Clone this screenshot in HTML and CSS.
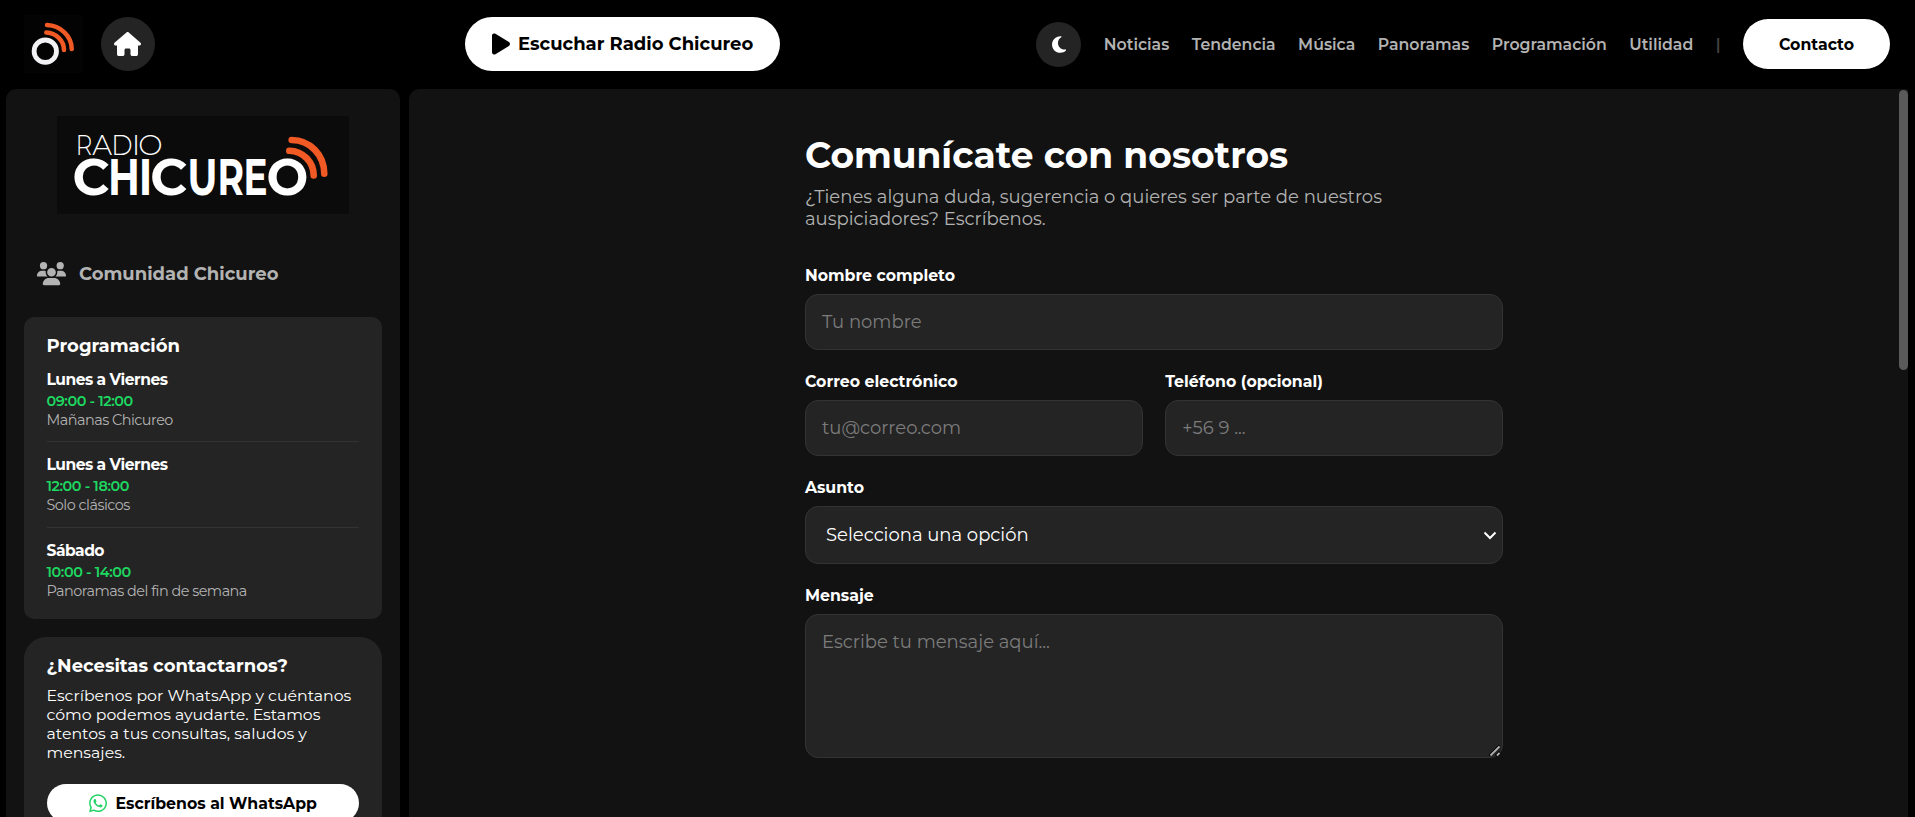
FILE: index.html
```html
<!DOCTYPE html>
<html lang="es">
<head>
  <meta charset="UTF-8">
  <title>Contacto - Radio Chicureo</title>
  <link rel="stylesheet" href="styles.css">
</head>
<body>

<header class="topbar">
  <div class="topbar-left">
    <a href="#" class="logo-mini">
      <svg width="59" height="58" viewBox="24 15 59 58">
        <circle cx="45.3" cy="51.2" r="11.2" fill="none" stroke="#f2f2f5" stroke-width="4.8"/>
        <path d="M47 25C60.5 25.5 71.7 36 71.7 49M46.3 32.5C56 33 64 40.5 64 50" fill="none" stroke="#f15a24" stroke-width="4.5" stroke-linecap="round"/>
      </svg>
    </a>
    <a href="#" class="btn-home">
      <svg width="27" height="24" viewBox="0 0 576 512" fill="#fff"><path d="M575.8 255.5c0 18-15 32.1-32 32.1h-32l.7 160.2c0 2.7-.2 5.4-.5 8.1V472c0 22.1-17.9 40-40 40H456c-1.1 0-2.2 0-3.3-.1c-1.4 .1-2.8 .1-4.2 .1H416 392c-22.1 0-40-17.9-40-40V448 384c0-17.7-14.3-32-32-32H256c-17.7 0-32 14.3-32 32v64 24c0 22.1-17.9 40-40 40H160 128.1c-1.5 0-3-.1-4.5-.2c-1.2 .1-2.4 .2-3.6 .2H104c-22.1 0-40-17.9-40-40V360c0-.9 0-1.9 .1-2.8V287.6H32c-18 0-32-14-32-32.1c0-9 3-17 10-24L266.4 8c7-7 15-8 22-8s15 2 21 7L564.8 231.5c8 7 12 15 11 24z"/></svg>
    </a>
  </div>

  <button class="btn-play">
    <svg width="18" height="24" viewBox="0 0 384 512"><path d="M73 39c-14.8-9.1-33.4-9.4-48.5-.9S0 62.6 0 80V432c0 17.4 9.4 33.4 24.5 41.9s33.7 8.1 48.5-.9L361 297c14.3-8.7 23-24.2 23-41s-8.7-32.2-23-41L73 39z"/></svg>
    <span>Escuchar Radio Chicureo</span>
  </button>

  <nav class="menu">
    <button class="btn-theme">
      <svg width="14.3" height="19" viewBox="0 0 384 512" fill="#fff"><path d="M223.5 32C100 32 0 132.3 0 256S100 480 223.5 480c60.6 0 115.5-24.2 155.8-63.4c5-4.9 6.3-12.5 3.1-18.7s-10.1-9.7-17-8.5c-9.8 1.7-19.8 2.6-30.1 2.6c-96.9 0-175.5-78.8-175.5-176c0-65.8 36-123.1 89.3-153.3c6.1-3.5 9.2-10.5 7.7-17.3s-7.3-11.9-14.3-12.5c-6.3-.5-12.6-.8-19-.8z"/></svg>
    </button>
    <a href="#">Noticias</a>
    <a href="#">Tendencia</a>
    <a href="#">Música</a>
    <a href="#">Panoramas</a>
    <a href="#">Programación</a>
    <a href="#">Utilidad</a>
    <span class="divider">|</span>
    <a href="#" class="btn-contact">Contacto</a>
  </nav>
</header>

<div class="layout">
  <aside class="sidebar">
    <div class="logo">
      <svg width="292" height="98" viewBox="57 116 292 98">
        <text class="logo-radio" y="154.7"><tspan x="75.8" textLength="16.5" lengthAdjust="spacingAndGlyphs">R</tspan><tspan x="92.3" textLength="19.8" lengthAdjust="spacingAndGlyphs">A</tspan><tspan x="111.3" textLength="21.3" lengthAdjust="spacingAndGlyphs">D</tspan><tspan x="131.7">I</tspan><tspan x="138.3">O</tspan></text>
        <text class="logo-name" y="195.3"><tspan x="72.5">C</tspan><tspan x="108.1" textLength="31.9" lengthAdjust="spacingAndGlyphs">H</tspan><tspan x="138.8" textLength="13.5" lengthAdjust="spacingAndGlyphs">I</tspan><tspan x="150.2">C</tspan><tspan x="187.5" textLength="29.9" lengthAdjust="spacingAndGlyphs">U</tspan><tspan x="217.4" textLength="26.5" lengthAdjust="spacingAndGlyphs">R</tspan><tspan x="243.4" textLength="24" lengthAdjust="spacingAndGlyphs">E</tspan><tspan x="266.6" textLength="41.8" lengthAdjust="spacingAndGlyphs">O</tspan></text>
        <path d="M291.7 140C310 140 324.3 155 324.3 173.7M289.3 150.7C303 151 313.7 162 313.7 175.5" fill="none" stroke="#f15a24" stroke-width="6.6" stroke-linecap="round"/>
      </svg>
    </div>

    <a href="#" class="community">
      <svg width="29" height="23.4" viewBox="0 0 640 512" fill="#b3b3b3"><path d="M144 0a80 80 0 1 1 0 160A80 80 0 1 1 144 0zM512 0a80 80 0 1 1 0 160A80 80 0 1 1 512 0zM0 298.7C0 239.8 47.8 192 106.7 192h42.7c15.9 0 31 3.5 44.6 9.7c-1.3 7.2-1.9 14.7-1.9 22.3c0 38.2 16.8 72.5 43.3 96c-.2 0-.4 0-.7 0H21.3C9.6 320 0 310.4 0 298.7zM405.3 320c-.2 0-.4 0-.7 0c26.6-23.5 43.3-57.8 43.3-96c0-7.6-.7-15-1.9-22.3c13.6-6.3 28.7-9.7 44.6-9.7h42.7C592.2 192 640 239.8 640 298.7c0 11.8-9.6 21.3-21.3 21.3H405.3zM224 224a96 96 0 1 1 192 0 96 96 0 1 1 -192 0zM128 485.3C128 411.7 187.7 352 261.3 352H378.7C452.3 352 512 411.7 512 485.3c0 14.7-11.9 26.7-26.7 26.7H154.7c-14.7 0-26.7-11.9-26.7-26.7z"/></svg>
      <span>Comunidad Chicureo</span>
    </a>

    <section class="card">
      <h2>Programación</h2>
      <ul class="schedule">
        <li>
          <strong>Lunes a Viernes</strong>
          <span class="time">09:00 - 12:00</span>
          <span class="show">Mañanas Chicureo</span>
        </li>
        <li>
          <strong>Lunes a Viernes</strong>
          <span class="time">12:00 - 18:00</span>
          <span class="show">Solo clásicos</span>
        </li>
        <li>
          <strong>Sábado</strong>
          <span class="time">10:00 - 14:00</span>
          <span class="show">Panoramas del fin de semana</span>
        </li>
      </ul>
    </section>

    <section class="card card-help">
      <h2>¿Necesitas contactarnos?</h2>
      <p>Escríbenos por WhatsApp y cuéntanos<br>cómo podemos ayudarte. Estamos<br>atentos a tus consultas, saludos y<br>mensajes.</p>
      <a href="#" class="btn-whatsapp">
        <svg width="18" height="20.5" viewBox="0 0 448 512" fill="#25d366"><path d="M380.9 97.1C339 55.1 283.2 32 223.9 32c-122.4 0-222 99.6-222 222 0 39.1 10.2 77.3 29.6 111L0 480l117.7-30.9c32.4 17.7 68.9 27 106.1 27h.1c122.3 0 224.1-99.6 224.1-222 0-59.3-25.2-115-67.1-157zm-157 341.6c-33.2 0-65.7-8.9-94-25.7l-6.7-4-69.8 18.3L72 359.2l-4.4-7c-18.5-29.4-28.2-63.3-28.2-98.2 0-101.7 82.8-184.5 184.6-184.5 49.3 0 95.6 19.2 130.4 54.1 34.8 34.9 56.2 81.2 56.1 130.5 0 101.8-84.9 184.6-186.6 184.6zm101.2-138.2c-5.5-2.8-32.8-16.2-37.9-18-5.1-1.9-8.8-2.8-12.5 2.8-3.7 5.6-14.3 18-17.6 21.8-3.2 3.7-6.5 4.2-12 1.4-32.6-16.3-54-29.1-75.5-66-5.7-9.8 5.7-9.1 16.3-30.3 1.8-3.7.9-6.9-.5-9.7-1.4-2.8-12.5-30.1-17.1-41.2-4.5-10.8-9.1-9.3-12.5-9.5-3.2-.2-6.9-.2-10.6-.2-3.7 0-9.7 1.4-14.8 6.9-5.1 5.6-19.4 19-19.4 46.3 0 27.3 19.9 53.7 22.6 57.4 2.8 3.7 39.1 59.7 94.8 83.8 35.2 15.2 49 16.5 66.6 13.9 10.7-1.6 32.8-13.4 37.4-26.4 4.6-13 4.6-24.1 3.2-26.4-1.3-2.5-5-3.9-10.5-6.6z"/></svg>
        <span>Escríbenos al WhatsApp</span>
      </a>
    </section>
  </aside>

  <main class="content">
    <form class="contact-form">
      <h1>Comunícate con nosotros</h1>
      <p class="intro">¿Tienes alguna duda, sugerencia o quieres ser parte de nuestros<br>auspiciadores? Escríbenos.</p>

      <div class="field">
        <label for="nombre">Nombre completo</label>
        <input type="text" id="nombre" placeholder="Tu nombre">
      </div>

      <div class="row">
        <div class="field">
          <label for="correo">Correo electrónico</label>
          <input type="email" id="correo" placeholder="tu@correo.com">
        </div>
        <div class="field">
          <label for="telefono">Teléfono (opcional)</label>
          <input type="tel" id="telefono" placeholder="+56 9 ...">
        </div>
      </div>

      <div class="field">
        <label for="asunto">Asunto</label>
        <select id="asunto">
          <option>Selecciona una opción</option>
        </select>
        <svg class="arrow" width="14" height="9" viewBox="0 0 14 9"><path d="M1.5 1.5L7 7l5.5-5.5" fill="none" stroke="#fff" stroke-width="2"/></svg>
      </div>

      <div class="field">
        <label for="mensaje">Mensaje</label>
        <textarea id="mensaje" placeholder="Escribe tu mensaje aquí..."></textarea>
        <svg class="grip" width="11" height="11" viewBox="0 0 11 11" fill="none">
          <path d="M0 10.5L10.500 0M6.500 10.500L10.500 6.500" stroke="#000" stroke-width="1.5"/>
          <path d="M1.500 10.500L10.500 1.500M8 10.500L10.500 8" stroke="#b3b3b3" stroke-width="1.8"/>
        </svg>
      </div>
    </form>
  </main>
</div>

</body>
</html>
```
FILE: styles.css
```css
* {
  box-sizing: border-box;
  margin: 0;
  padding: 0;
}

body {
  height: 100vh;
  overflow: hidden;
  background-color: #000;
  color: #fff;
  font-family: "Montserrat", "Inter", sans-serif;
}

a {
  color: inherit;
  text-decoration: none;
}

button {
  border: none;
  font-family: inherit;
}

svg {
  display: block;
  flex-shrink: 0;
}

/* header */
.topbar {
  display: flex;
  align-items: center;
  height: 89px;
  padding: 0 25px 1px 24px;
}

.topbar-left {
  display: flex;
  align-items: center;
  gap: 18px;
  width: 441px;
}

.logo-mini {
  background-color: #030303;
}

.btn-home,
.btn-theme {
  display: flex;
  align-items: center;
  justify-content: center;
  border-radius: 50%;
  background-color: #242424;
}

.btn-home {
  width: 54px;
  height: 54px;
  padding-right: 1px;
}

.btn-play {
  display: flex;
  align-items: center;
  gap: 8px;
  width: 315px;
  height: 54px;
  padding-left: 27px;
  border-radius: 27px;
  background-color: #fff;
  color: #000;
  font-size: 18px;
  font-weight: 700;
  white-space: nowrap;
}

.menu {
  display: flex;
  align-items: center;
  gap: 22.5px;
  margin-left: auto;
  color: #b3b3b3;
  font-size: 15.75px;
  font-weight: 600;
}

.btn-theme {
  width: 45px;
  height: 45px;
}

.divider {
  color: #444;
}

.btn-contact {
  width: 147px;
  height: 50px;
  border-radius: 25px;
  background-color: #fff;
  color: #000;
  font-weight: 700;
  line-height: 51px;
  text-align: center;
}

/* layout */
.layout {
  display: flex;
  gap: 9px;
  height: 728px;
  padding: 0 7px 0 6px;
}

.sidebar {
  width: 394px;
  padding: 27px 18px 0;
  overflow: hidden;
  border-radius: 10px 10px 0 0;
  background-color: #121212;
}

.logo {
  width: 292px;
  margin: 0 auto;
  background-color: #0b0b0b;
}

.logo text {
  fill: #fff;
}

.logo-radio {
  font-size: 29px;
  font-weight: 300;
}

.logo-name {
  font-size: 51px;
  font-weight: 700;
}

.community {
  display: flex;
  align-items: center;
  gap: 13px;
  height: 24px;
  margin: 48px 0 31px 13px;
  color: #b3b3b3;
  font-size: 18px;
  font-weight: 700;
}

.card {
  height: 302px;
  margin-bottom: 18px;
  padding: 18px 23px 18px 22.5px;
  border-radius: 10px;
  background-color: #242424;
}

.card h2 {
  font-size: 18px;
  font-weight: 700;
  line-height: 22px;
}

.schedule {
  margin-top: 10px;
  list-style: none;
}

.schedule li {
  height: 86px;
  padding-top: 12px;
  letter-spacing: -0.5px;
}

.schedule li:first-child {
  height: 74px;
  padding-top: 2px;
}

.schedule li + li {
  border-top: 1px solid #333;
}

.schedule strong,
.schedule span {
  display: block;
}

.schedule strong {
  font-size: 15.5px;
  line-height: 22px;
}

.schedule .time {
  color: #1ed760;
  font-size: 14.4px;
  font-weight: 600;
  letter-spacing: -0.42px;
  line-height: 20px;
}

.schedule .show {
  color: #b3b3b3;
  font-size: 14.4px;
  line-height: 18px;
}

.card-help {
  border-radius: 22px;
}

.card-help p {
  margin-top: 9px;
  font-size: 15.75px;
  line-height: 19px;
  white-space: nowrap;
}

.btn-whatsapp {
  display: flex;
  align-items: center;
  justify-content: center;
  gap: 9px;
  height: 38px;
  margin-top: 22px;
  border-radius: 19px;
  background-color: #fff;
  color: #000;
  font-size: 15.75px;
  font-weight: 700;
}

/* main panel */
.content {
  position: relative;
  flex: 1;
  padding: 46px 0 0 396px;
  border-radius: 10px 0 0 0;
  background-color: #121212;
}

/* scrollbar thumb */
.content::after {
  content: "";
  position: absolute;
  top: 1px;
  right: 0;
  width: 9px;
  height: 280px;
  border-radius: 5px;
  background-color: #5a5a5a;
}

.contact-form {
  width: 698px;
}

h1 {
  font-size: 36px;
  font-weight: 700;
  line-height: 40px;
}

.intro {
  margin: 11px 0 36px;
  color: #b3b3b3;
  font-size: 18px;
  line-height: 22px;
  white-space: nowrap;
}

.row {
  display: grid;
  grid-template-columns: 1fr 1fr;
  gap: 22.5px;
}

.field {
  position: relative;
  margin-bottom: 22px;
}

label {
  display: block;
  height: 20px;
  margin-bottom: 8px;
  font-size: 15.75px;
  font-weight: 700;
  line-height: 20px;
}

input,
select,
textarea {
  display: block;
  width: 100%;
  height: 56px;
  padding: 0 16px;
  border: 1px solid #333;
  border-radius: 13px;
  background-color: #242424;
  color: #fff;
  font-family: inherit;
  font-size: 18px;
}

select {
  height: 58px;
  padding-left: 20px;
  appearance: none;
}

textarea {
  height: 144px;
  padding-top: 16px;
  resize: none;
}

.arrow {
  position: absolute;
  right: 6px;
  bottom: 24px;
}

.grip {
  position: absolute;
  right: 3px;
  bottom: 2px;
}

::placeholder {
  color: #7c7c7c;
}
```
